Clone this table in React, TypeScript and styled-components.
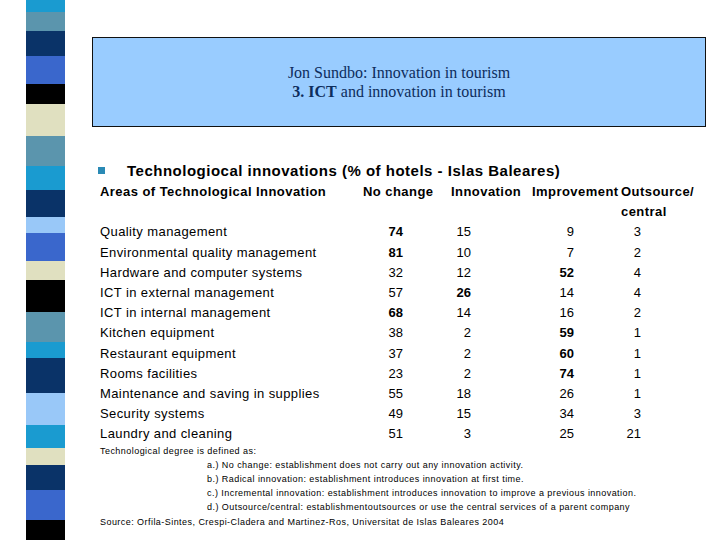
import React from "react";
import styled, { createGlobalStyle } from "styled-components";

const Global = createGlobalStyle`
  html, body { margin: 0; padding: 0; background: #fff; }
  body { width: 720px; height: 540px; overflow: hidden; }
`;

const Page = styled.div`
  width: 720px;
  height: 540px;
  display: flex;
  background: #fff;
`;

const Stripes = styled.div`
  width: 39px;
  margin-left: 26px;
  display: flex;
  flex-direction: column;
`;

const Stripe = styled.div<{ $h: number; $c: string }>`
  height: ${(p) => p.$h}px;
  background: ${(p) => p.$c};
  flex: none;
`;

const Main = styled.div`
  flex: 1;
  padding: 37px 14px 0 27px;
  display: flex;
  flex-direction: column;
`;

const TitleBox = styled.div`
  height: 90px;
  border: 1px solid #111;
  background: #99ccff;
  display: flex;
  flex-direction: column;
  align-items: center;
  justify-content: center;
  padding-top: 0;
  box-sizing: border-box;
  font-family: "Liberation Serif", "Times New Roman", serif;
  font-size: 16px;
  line-height: 19px;
  color: #0d2d5c;
`;

const Body = styled.div`
  padding-left: 8px;
  margin-top: 33px;
  font-family: "Liberation Sans", Arial, sans-serif;
  color: #000;
`;

const Heading = styled.div`
  display: flex;
  align-items: center;
  height: 20px;
  margin-bottom: 2px;
  font-size: 15px;
  font-weight: bold;
  letter-spacing: 0.5px;
`;

const Bullet = styled.span`
  width: 7px;
  height: 7px;
  background: #2a8ab5;
  margin: 0 22px 0 -2px;
  flex: none;
`;

const Table = styled.div`
  display: grid;
  grid-template-columns: 263px 88px 81px 89px 79px;
  font-size: 13px;
  line-height: 20.2px;
  letter-spacing: 0.4px;
`;

const HeadCell = styled.div`
  font-weight: bold;
  white-space: nowrap;
  letter-spacing: 0.45px;
`;

const Label = styled.div`
  white-space: nowrap;
`;

const Num = styled.div<{ $pr: number; $b?: boolean }>`
  text-align: right;
  padding-right: ${(p) => p.$pr}px;
  font-weight: ${(p) => (p.$b ? "bold" : "normal")};
  letter-spacing: 0;
`;

const Notes = styled.div`
  font-size: 9px;
  line-height: 14.2px;
  margin-top: -1px;
  letter-spacing: 0.45px;
  white-space: nowrap;
`;

const NoteItem = styled.div`
  padding-left: 107px;
`;

const stripes: [number, string][] = [
  [12, "#1a9bd0"],
  [19, "#5b95ad"],
  [25, "#0a3368"],
  [28, "#3a67cc"],
  [20, "#000000"],
  [32, "#e0e0c0"],
  [30, "#5b95ad"],
  [24, "#1a9bd0"],
  [27, "#0a3368"],
  [16, "#99c8f8"],
  [28, "#3a67cc"],
  [19, "#e0e0c0"],
  [32, "#000000"],
  [30, "#5b95ad"],
  [16, "#1a9bd0"],
  [35, "#0a3368"],
  [32, "#99c8f8"],
  [23, "#1a9bd0"],
  [17, "#e0e0c0"],
  [25, "#0a3368"],
  [30, "#3a67cc"],
  [20, "#000000"],
];

type Row = { label: string; v: [number, number, number, number]; bold: number };

const rows: Row[] = [
  { label: "Quality management", v: [74, 15, 9, 3], bold: 0 },
  { label: "Environmental quality management", v: [81, 10, 7, 2], bold: 0 },
  { label: "Hardware and computer systems", v: [32, 12, 52, 4], bold: 2 },
  { label: "ICT in external management", v: [57, 26, 14, 4], bold: 1 },
  { label: "ICT in internal management", v: [68, 14, 16, 2], bold: 0 },
  { label: "Kitchen equipment", v: [38, 2, 59, 1], bold: 2 },
  { label: "Restaurant equipment", v: [37, 2, 60, 1], bold: 2 },
  { label: "Rooms facilities", v: [23, 2, 74, 1], bold: 2 },
  { label: "Maintenance and saving in supplies", v: [55, 18, 26, 1], bold: -1 },
  { label: "Security systems", v: [49, 15, 34, 3], bold: -1 },
  { label: "Laundry and cleaning", v: [51, 3, 25, 21], bold: -1 },
];

const pads = [48, 61, 47, 59];

export default function App() {
  return (
    <Page>
      <Global />
      <Stripes>
        {stripes.map(([h, c], i) => (
          <Stripe key={i} $h={h} $c={c} />
        ))}
      </Stripes>
      <Main>
        <TitleBox>
          <div>Jon Sundbo: Innovation in tourism</div>
          <div>
            <b>3. ICT</b> and innovation in tourism
          </div>
        </TitleBox>
        <Body>
          <Heading>
            <Bullet />
            Technologiocal innovations (% of hotels - Islas Baleares)
          </Heading>
          <Table>
            <HeadCell>Areas of Technological Innovation</HeadCell>
            <HeadCell>No change</HeadCell>
            <HeadCell>Innovation</HeadCell>
            <HeadCell>Improvement</HeadCell>
            <HeadCell>Outsource/</HeadCell>
            <div />
            <div />
            <div />
            <div />
            <HeadCell>central</HeadCell>
            {rows.map((r) => (
              <React.Fragment key={r.label}>
                <Label>{r.label}</Label>
                {r.v.map((n, j) => (
                  <Num key={j} $pr={pads[j]} $b={r.bold === j}>
                    {n}
                  </Num>
                ))}
              </React.Fragment>
            ))}
          </Table>
          <Notes>
            <div>Technological degree is defined as:</div>
            <NoteItem>a.) No change: establishment does not carry out any innovation activity.</NoteItem>
            <NoteItem>b.) Radical innovation: establishment introduces innovation at first time.</NoteItem>
            <NoteItem>
              c.) Incremental innovation: establishment introduces innovation to improve a previous innovation.
            </NoteItem>
            <NoteItem>
              d.) Outsource/central: establishmentoutsources or use the central services of a parent company
            </NoteItem>
            <div>Source: Orfila-Sintes, Crespi-Cladera and Martinez-Ros, Universitat de Islas Baleares 2004</div>
          </Notes>
        </Body>
      </Main>
    </Page>
  );
}
